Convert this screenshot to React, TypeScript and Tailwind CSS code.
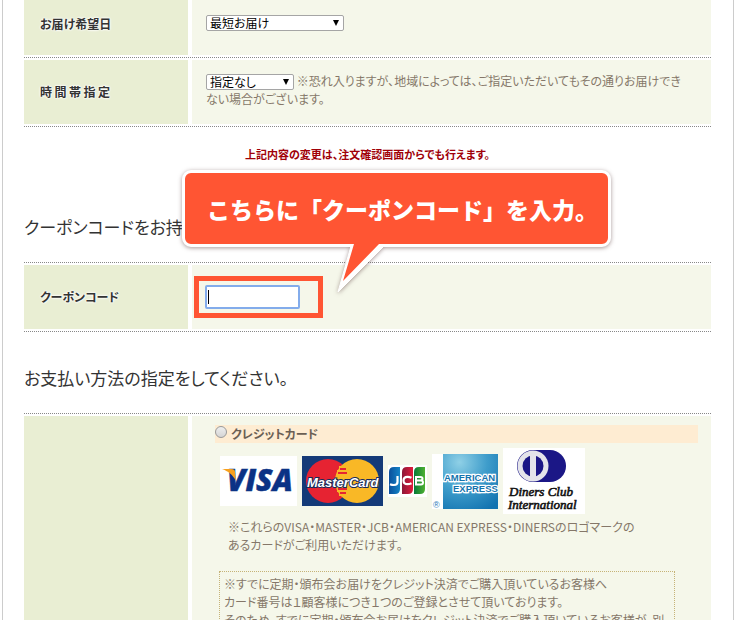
import type { ReactNode } from "react";

function Row({
	label,
	htmlFor,
	children,
	className = "h-16",
	justified = false,
}: {
	label: string;
	htmlFor?: string;
	children: ReactNode;
	className?: string;
	justified?: boolean;
}) {
	return (
		<div className="grid grid-cols-[164px_1fr] gap-1 border-b border-dotted border-[#888] py-[2px]">
			<div className={`flex items-center bg-[#e9eed3] pl-4 ${className}`}>
				{label && (
					<label
						htmlFor={htmlFor}
						className={`text-xs font-bold text-[#333] [text-shadow:0_0_2px_#fff,0_0_2px_#fff,0_0_3px_#fff] ${
							justified ? "w-[70px] [text-align-last:justify]" : ""
						}`}
					>
						{label}
					</label>
				)}
			</div>
			<div className={`flex items-center bg-[#f5f7ea] ${className}`}>{children}</div>
		</div>
	);
}

function Select({ id, option, className }: { id: string; option: string; className: string }) {
	return (
		<span className={`relative inline-block h-4 align-middle ${className}`}>
			<select
				id={id}
				className="block h-4 w-full appearance-none rounded-xs border border-[#a5a5a5] bg-white pl-[3px] text-xs leading-[14px] text-black"
			>
				<option>{option}</option>
			</select>
			<svg viewBox="0 0 6 6" className="pointer-events-none absolute top-[5px] right-[5px] size-[6px]">
				<path d="M0 0h6L3 6z" fill="#000" />
			</svg>
		</span>
	);
}

function Callout() {
	return (
		<div className="absolute -top-[93px] left-[158px] z-10 w-[429px] drop-shadow-[0_1px_2px_rgba(80,50,50,0.5)]">
			<p className="flex h-[77px] items-center justify-center rounded-[9px] border-3 border-white bg-[#ff5533] pl-3 text-[23px] font-black whitespace-nowrap text-white [font-feature-settings:normal]">
				こちらに「クーポンコード」を入力。
			</p>
			<svg viewBox="0 0 52 54" className="absolute top-[70px] left-[152px] h-[54px] w-[52px]">
				<path d="M17 6L4 52L49 7" fill="#fff" stroke="#fff" strokeWidth="1" />
				<path d="M16 0h36L45 4L9 41L20 4H16z" fill="#ff5533" />
			</svg>
		</div>
	);
}

function Visa() {
	return (
		<svg viewBox="0 0 77 50" className="h-[50px] w-[77px] bg-white">
			<text
				x="7"
				y="35"
				fontFamily="Open Sans"
				fontSize="30"
				fontWeight="800"
				fontStyle="italic"
				fill="#0b3285"
				stroke="#0b3285"
				strokeWidth="0.500"
			>
				VISA
			</text>
			<path d="M2 13h9c3 0 4 1 4 3l1 9C13 19 8 15 2 13z" fill="#f7a01d" />
		</svg>
	);
}

function MasterCard() {
	return (
		<svg viewBox="0 0 81 50" className="h-[50px] w-[81px]">
			<rect width="81" height="50" fill="#143a78" />
			<circle cx="26" cy="25" r="22" fill="#e62332" />
			<circle cx="55" cy="25" r="22" fill="#f9b826" />
			<path d="M37 11h7M35 15h9M34 19h11M34 31h11M35 35h9M37 39h7" stroke="#f9b826" strokeWidth="2" />
			<path d="M38 13h6M36 17h9M36 33h9M38 37h6" stroke="#e62332" strokeWidth="2" />
			<text
				x="5"
				y="31"
				fontFamily="Liberation Sans"
				fontSize="13"
				fontWeight="700"
				fontStyle="italic"
				fill="#fff"
				stroke="#172b5a"
				strokeWidth="2"
				paintOrder="stroke"
			>
				MasterCard
			</text>
		</svg>
	);
}

function Jcb() {
	return (
		<svg viewBox="0 0 39 32" className="h-8 w-[39px] bg-white">
			<defs>
				<linearGradient id="jcb-blue">
					<stop stopColor="#0a4f9c" />
					<stop offset="1" stopColor="#1483c6" />
				</linearGradient>
				<linearGradient id="jcb-red">
					<stop stopColor="#8c1838" />
					<stop offset="1" stopColor="#e01b3c" />
				</linearGradient>
				<linearGradient id="jcb-green">
					<stop stopColor="#087a3a" />
					<stop offset="1" stopColor="#4fb130" />
				</linearGradient>
			</defs>
			<path d="M1 7q0-5 5-5h6v22q0 5-5 5H1z" fill="url(#jcb-blue)" />
			<path d="M14 7q0-5 5-5h6v22q0 5-5 5h-6z" fill="url(#jcb-red)" />
			<path d="M26 7q0-5 5-5h6v22q0 5-5 5h-6z" fill="url(#jcb-green)" />
			<path
				d="M9.500 11v6q0 3-3.500 3-2 0-4-.8M23.500 12.800q-2-1-4-1-4 0-4 3.700t4 3.700q2 0 4-1"
				fill="none"
				stroke="#fff"
				strokeWidth="2.200"
			/>
			<path
				d="M28 12h4.500q2 0 2 1.700t-2 1.800h-4.500zM28 15.500h5q2 0 2 2t-2 2h-5z"
				fill="none"
				stroke="#fff"
				strokeWidth="2"
			/>
		</svg>
	);
}

function Amex() {
	return (
		<svg viewBox="0 0 66 55" className="h-[55px] w-[66px]">
			<defs>
				<radialGradient id="amex" cx="0.300" cy="0.150" r="1">
					<stop stopColor="#8fd0e6" />
					<stop offset="0.500" stopColor="#3f9dcb" />
					<stop offset="1" stopColor="#1273b0" />
				</radialGradient>
			</defs>
			<rect width="66" height="55" fill="#fff" />
			<rect x="11" width="55" height="55" fill="url(#amex)" />
			<text
				fontFamily="Liberation Sans"
				fontSize="9.500"
				fontWeight="700"
				fill="#1474ae"
				stroke="#fff"
				strokeWidth="2.500"
				paintOrder="stroke"
			>
				<tspan x="12" y="27">AMERICAN</tspan>
				<tspan x="21" y="38">EXPRESS</tspan>
			</text>
			<text x="1" y="54" fontFamily="Liberation Sans" fontSize="9" fill="#2a7ab8">
				®
			</text>
		</svg>
	);
}

function Diners() {
	return (
		<svg viewBox="0 0 82 66" className="h-[66px] w-[82px] bg-white">
			<rect x="14" y="2" width="49" height="32" rx="16" fill="#1b1786" />
			<circle cx="30" cy="18" r="15.500" fill="#e4e4ea" />
			<circle cx="30" cy="18" r="10.500" fill="#1b1786" />
			<path d="M27 7h6v22h-6z" fill="#e4e4ea" />
			<text fontFamily="Liberation Serif" fontSize="13" fontStyle="italic" fill="#111" stroke="#111" strokeWidth="0.600">
				<tspan x="6" y="48">Diners Club</tspan>
				<tspan x="5" y="61">International</tspan>
			</text>
		</svg>
	);
}

export default function App() {
	return (
		<div className="h-screen overflow-hidden bg-white px-[2px] font-['Noto_Sans_CJK_JP',sans-serif] text-xs leading-[18px] text-[#857769] [font-feature-settings:'palt']">
			<main className="min-h-full border-x border-[#ccc] pr-[22px] pl-[21px]">
				<section className="-mt-[2px]">
					<Row label="お届け希望日" htmlFor="date" className="h-[55px] pb-2">
						<div className="pb-1 pl-[14px]">
							<Select id="date" option="最短お届け" className="w-[138px]" />
						</div>
					</Row>
					<Row label="時間帯指定" htmlFor="time" justified>
						<p className="pr-4 pb-1 pl-[14px]">
							<Select id="time" option="指定なし" className="w-[88px]" />{" "}
							※恐れ入りますが、地域によっては、ご指定いただいてもその通りお届けでき
							<br />
							ない場合がございます。
						</p>
					</Row>
				</section>

				<p className="mt-[18px] text-center text-[11px] font-bold text-[#a00008]">
					上記内容の変更は、注文確認画面からでも行えます。
				</p>

				<h2 className="mt-[52px] text-[17px] leading-6 text-[#333]">クーポンコードをお持ちの方</h2>
				<section className="relative mt-[23px] border-t border-dotted border-[#888]">
					<Callout />
					<Row label="クーポンコード" htmlFor="coupon">
						<div className="relative ml-[2px] border-5 border-[#ff5533] py-1 pr-[18px] pl-[6px]">
							<input
								id="coupon"
								type="text"
								className="block h-6 w-[95px] rounded-xs border-2 border-[#83aceb] bg-white px-1 text-black outline-none"
							/>
							<span className="absolute top-[9px] left-[9px] h-[14px] w-px bg-black" />
						</div>
					</Row>
				</section>

				<h2 className="mt-[34px] text-[17px] leading-6 text-[#333]">お支払い方法の指定をしてください。</h2>
				<section className="mt-[23px] border-t border-dotted border-[#888]">
					<Row label="" className="h-auto">
						<div className="w-full pt-[9px] pr-[13px] pb-6 pl-[23px]">
							<label className="flex h-[18px] items-center gap-1 bg-[#feecd2] font-bold text-[#6b5f54]">
								<input
									type="radio"
									name="payment"
									className="mb-1 size-3 appearance-none rounded-full border border-[#999] bg-linear-to-b from-[#eee] to-[#d5d5d5]"
								/>
								クレジットカード
							</label>
							<div className="mt-[5px] ml-[5px] flex items-center gap-[5px]">
								<Visa />
								<MasterCard />
								<Jcb />
								<Amex />
								<Diners />
							</div>
							<p className="mt-1 ml-[13px]">
								※これらのVISA・MASTER・JCB・AMERICAN EXPRESS・DINERSのロゴマークの
								<br />
								あるカードがご利用いただけます。
							</p>
							<div className="mt-[17px] mr-[23px] ml-1 border border-dotted border-[#c6b377] px-1 py-[3px]">
								<p className="whitespace-nowrap">
									※すでに定期・頒布会お届けをクレジット決済でご購入頂いているお客様へ
									<br />
									カード番号は１顧客様につき１つのご登録とさせて頂いております。
									<br />
									そのため、すでに定期・頒布会お届けをクレジット決済でご購入頂いているお客様が、別
								</p>
							</div>
						</div>
					</Row>
				</section>
			</main>
		</div>
	);
}
